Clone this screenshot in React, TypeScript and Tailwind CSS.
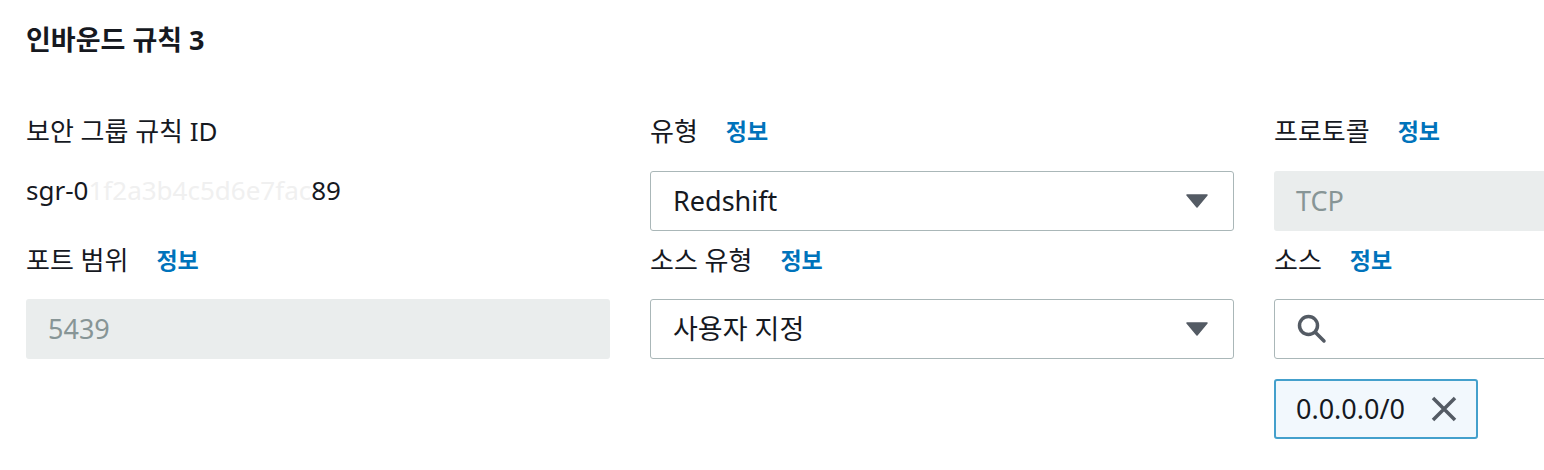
import React from "react";

const font = { fontFamily: '"Noto Sans", "Noto Sans CJK KR", sans-serif' };

function Info() {
  return <span className="ml-[28px] font-bold text-[#0073bb] text-[23px]">정보</span>;
}

function Label({ text, info = false }: { text: string; info?: boolean }) {
  return (
    <div className="h-[40px] flex items-center text-[26px] text-[#16191f] leading-[40px] whitespace-nowrap">
      <span>{text}</span>
      {info && <Info />}
    </div>
  );
}

function Caret() {
  return (
    <svg width="22" height="14" viewBox="0 0 22 14">
      <path d="M1 1 H21 L11 13 Z" fill="#545b64" stroke="#545b64" strokeWidth="1.5" strokeLinejoin="round" />
    </svg>
  );
}

function Select({ value }: { value: string }) {
  return (
    <div className="h-[60px] border border-[#aab7b8] rounded-[3px] bg-white flex items-center justify-between pl-[22px] pr-[25px] text-[27px] text-[#16191f]">
      <span>{value}</span>
      <Caret />
    </div>
  );
}

function Disabled({ value }: { value: string }) {
  return (
    <div className="h-[60px] rounded-[3px] bg-[#eaeded] flex items-center pl-[22px] text-[27px] text-[#879596]">
      <span>{value}</span>
    </div>
  );
}

export default function App() {
  return (
    <div className="w-[1544px] h-[470px] overflow-hidden bg-white" style={font}>
      <div className="pt-[20px] pl-[26px]">
        <div className="h-[40px] leading-[40px] text-[27px] font-bold text-[#16191f]">인바운드 규칙 3</div>
        <div className="mt-[51px] grid grid-cols-[584px_584px_584px] gap-x-[40px] w-max">
          {/* row 1 */}
          <div>
            <Label text="보안 그룹 규칙 ID" />
            <div className="h-[60px] mt-[19px]">
              <div className="leading-[40px] text-[26px] text-[#16191f] whitespace-nowrap">
                sgr-0<span className="text-[#f0f0f0]">1f2a3b4c5d6e7fac</span>89
              </div>
            </div>
          </div>
          <div>
            <Label text="유형" info />
            <div className="mt-[20px]">
              <Select value="Redshift" />
            </div>
          </div>
          <div>
            <Label text="프로토콜" info />
            <div className="mt-[20px]">
              <Disabled value="TCP" />
            </div>
          </div>
          {/* row 2 */}
          <div className="mt-[9px]">
            <Label text="포트 범위" info />
            <div className="mt-[19px]">
              <Disabled value="5439" />
            </div>
          </div>
          <div className="mt-[9px]">
            <Label text="소스 유형" info />
            <div className="mt-[19px]">
              <Select value="사용자 지정" />
            </div>
          </div>
          <div className="mt-[9px]">
            <Label text="소스" info />
            <div className="mt-[19px] h-[60px] border border-[#aab7b8] rounded-[3px] bg-white flex items-center pl-[21px]">
              <svg width="32" height="32" viewBox="0 0 32 32">
                <circle cx="12.5" cy="12.5" r="9" fill="none" stroke="#545b64" strokeWidth="3.5" />
                <path d="M19.5 19.5 L28 28" stroke="#545b64" strokeWidth="3.5" strokeLinecap="round" />
              </svg>
            </div>
            <div className="mt-[20px] inline-flex items-center h-[60px] border-2 border-[#44a0cc] rounded-[3px] bg-[#f2f8fd] pl-[20px] pr-[18px]">
              <span className="text-[27px] text-[#16191f]">0.0.0.0/0</span>
              <svg className="ml-[25px]" width="28" height="28" viewBox="0 0 28 28">
                <path d="M3 3 L25 25 M25 3 L3 25" stroke="#545b64" strokeWidth="3.5" />
              </svg>
            </div>
          </div>
        </div>
      </div>
    </div>
  );
}
